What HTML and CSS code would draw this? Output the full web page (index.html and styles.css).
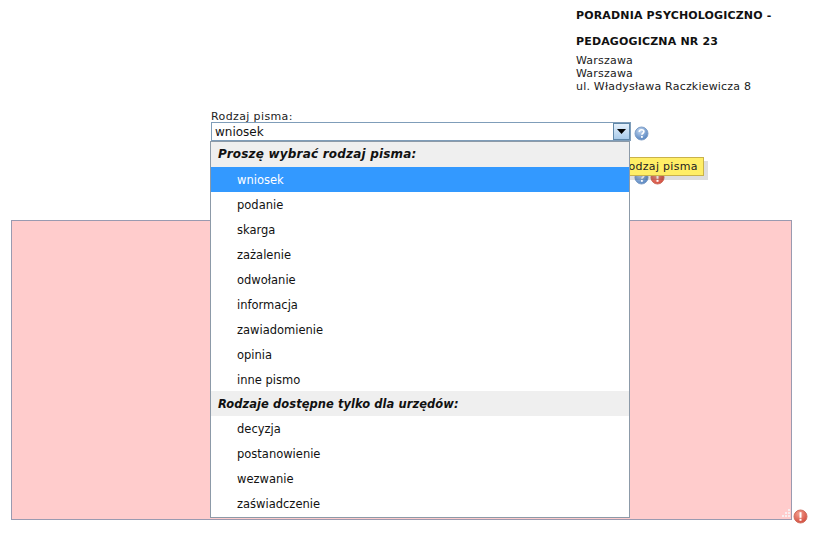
FILE: index.html
```html
<!DOCTYPE html>
<html lang="pl">
<head>
  <meta charset="UTF-8">
  <title>Rodzaj pisma</title>
  <link rel="stylesheet" href="styles.css">
</head>
<body>
  <div class="nadawca">
    <h4>PORADNIA PSYCHOLOGICZNO -</h4>
    <h4>PEDAGOGICZNA NR 23</h4>
    <p>Warszawa<br>Warszawa<br>ul. Władysława Raczkiewicza 8</p>
  </div>

  <div class="pole">
    <label class="etykieta">Rodzaj pisma:</label>
    <div class="wiersz">
      <div class="combo">
        <span class="combo-tekst">wniosek</span>
        <span class="combo-btn"><svg width="9" height="5" viewBox="0 0 9 5"><path d="M0 0h9L4.500 5z" fill="#000"/></svg></span>
      </div>
      <svg class="ikona ikona-combo" width="15" height="15" viewBox="0 0 15 15"><use href="#pomoc"/></svg>
    </div>

    <ul class="lista">
      <li class="grupa">Proszę wybrać rodzaj pisma:</li>
      <li class="wybrany">wniosek</li>
      <li>podanie</li>
      <li>skarga</li>
      <li>zażalenie</li>
      <li>odwołanie</li>
      <li>informacja</li>
      <li>zawiadomienie</li>
      <li>opinia</li>
      <li>inne pismo</li>
      <li class="grupa grupa-urzedy">Rodzaje dostępne tylko dla urzędów:</li>
      <li>decyzja</li>
      <li>postanowienie</li>
      <li>wezwanie</li>
      <li>zaświadczenie</li>
    </ul>
  </div>

  <div class="wiersz-ikon">
    <svg class="ikona" width="15" height="15" viewBox="0 0 15 15"><use href="#pomoc"/></svg>
    <svg class="ikona" width="15" height="15" viewBox="0 0 15 15"><use href="#blad"/></svg>
    <div class="dymek">Rodzaj pisma</div>
  </div>

  <div class="tresc">
    <svg class="uchwyt" width="10" height="10" viewBox="0 0 10 10" fill="#f7eef0">
      <rect x="7" y="0" width="2" height="2"/><rect x="7" y="3" width="2" height="2"/><rect x="7" y="6" width="2" height="2"/>
      <rect x="4" y="3" width="2" height="2"/><rect x="4" y="6" width="2" height="2"/><rect x="1" y="6" width="2" height="2"/>
    </svg>
    <svg class="ikona-rog" width="15" height="15" viewBox="0 0 15 15"><use href="#blad"/></svg>
  </div>

  <svg width="0" height="0" class="defs">
    <defs>
      <radialGradient id="nieb" cx="40%" cy="30%" r="75%"><stop offset="0" stop-color="#c5d8f0"/><stop offset="1" stop-color="#4f7fbd"/></radialGradient>
      <radialGradient id="czer" cx="40%" cy="30%" r="75%"><stop offset="0" stop-color="#f4a090"/><stop offset="1" stop-color="#d2483a"/></radialGradient>
      <g id="pomoc">
        <circle cx="7.500" cy="7.500" r="6.500" fill="url(#nieb)" stroke="#7f9fc8"/>
        <path d="M5.200 5.800c.2-1.500 1.300-2.100 2.400-2.100 1.400 0 2.300.8 2.300 1.900 0 1.700-2 1.600-2 3.200" fill="none" stroke="#fff" stroke-width="1.600"/>
        <rect x="7" y="10" width="1.800" height="1.800" fill="#fff"/>
      </g>
      <g id="blad">
        <circle cx="7.500" cy="7.500" r="6.500" fill="url(#czer)" stroke="#d0705f"/>
        <rect x="6.500" y="3.200" width="2" height="5.600" fill="#fff"/>
        <rect x="6.500" y="9.800" width="2" height="2" fill="#fff"/>
      </g>
    </defs>
  </svg>
</body>
</html>
```

FILE: styles.css
```css
html, body { margin: 0; padding: 0; }
body { background-color: #fff; font-family: "DejaVu Sans", Verdana, sans-serif; font-size: 11px; color: #222; width: 820px; height: 535px; overflow: hidden; position: relative; }

.nadawca { margin-left: 576px; padding-top: 9px; height: 101px; line-height: 13px; }
.nadawca h4 { margin: 0 0 13px; font-size: 11px; font-weight: bold; color: #111; line-height: 13px; letter-spacing: .16px; }
.nadawca h4 + h4 { margin-bottom: 6px; }
.nadawca p { margin: 0; letter-spacing: .2px; }

.pole { margin-left: 211px; position: relative; }
.etykieta { display: block; height: 12px; line-height: 14px; letter-spacing: .38px; }
.wiersz { display: flex; align-items: flex-start; gap: 3px; }
.combo { box-sizing: border-box; width: 420px; height: 19px; border: 1px solid #7f9db9; display: flex; justify-content: space-between; background: #fff; }
.combo-tekst { font-size: 12px; line-height: 18px; padding-left: 3px; color: #111; }
.combo-btn { width: 17px; height: 17px; box-sizing: border-box; border: 1px solid #5f87a8; background: linear-gradient(#e4f0fb, #a9cbea); display: flex; align-items: center; justify-content: center; }
.ikona { display: block; flex: none; }
.ikona-combo { margin-top: 4px; }

.lista { list-style: none; margin: 0; padding: 0; position: absolute; z-index: 5; left: -1px; top: 31px; width: 418px; height: 375px; border: 1px solid #8c9aa8; background: #fff; font-size: 11.5px; color: #111; }
.lista li { box-sizing: border-box; height: 25px; line-height: 25px; padding: 1px 0 0 26px; }
.lista .grupa { background: #efefef; font-size: 12px; font-weight: bold; font-style: italic; letter-spacing: .2px; padding: 0 0 0 7px; }
.lista .wybrany { background: #3399ff; color: #fff; }
.lista .grupa-urzedy { margin-top: -1px; padding-top: 1px; font-size: 11.5px; letter-spacing: .05px; }

.wiersz-ikon { display: flex; gap: 1px; margin: 29px 0 0 634px; height: 15px; position: relative; }
.dymek { position: absolute; z-index: 4; left: -19px; top: -13px; background: #ffee66; border: 1px solid #c9b24a; box-shadow: 4px 4px 0 rgba(0,0,0,.13); font-size: 11px; letter-spacing: .3px; line-height: 17px; padding: 0 5px; height: 17px; white-space: nowrap; color: #222; }

.tresc { position: relative; box-sizing: border-box; margin: 35px 0 0 11px; width: 781px; height: 300px; background: #ffcccc; border: 1px solid #9a9ab0; }
.uchwyt { position: absolute; right: 0; bottom: 0; }
.ikona-rog { position: absolute; right: -17px; bottom: -5px; }

.defs { position: absolute; }
```
